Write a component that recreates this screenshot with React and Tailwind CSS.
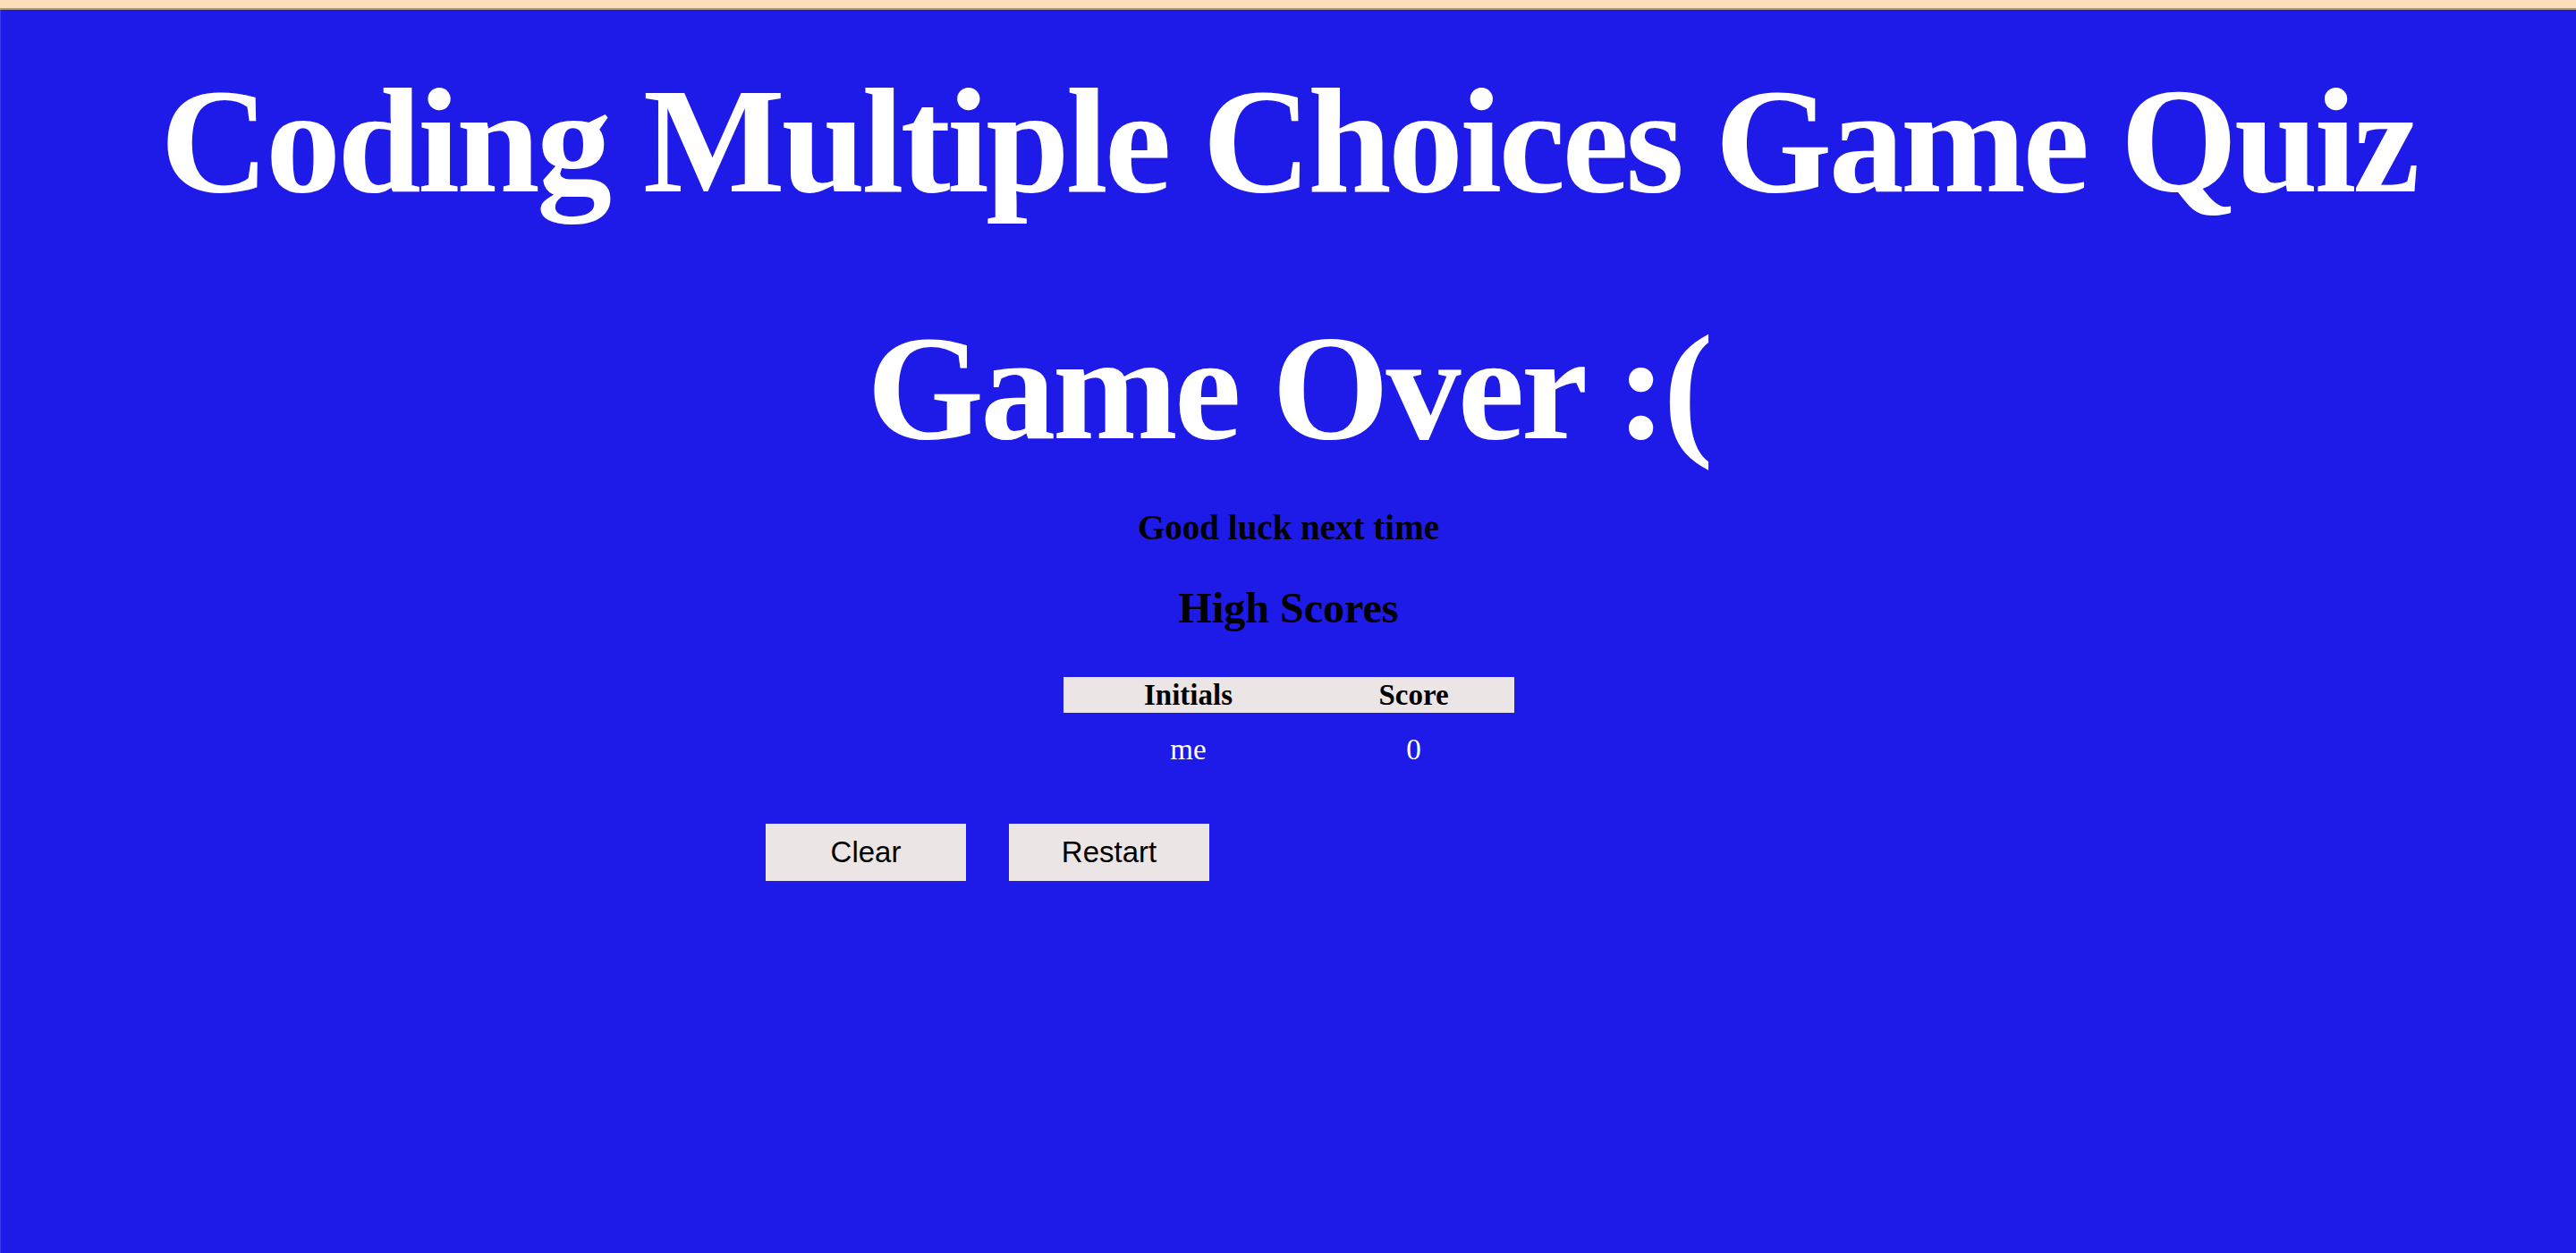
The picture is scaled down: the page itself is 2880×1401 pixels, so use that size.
import React from 'react';

const scores = [{ initials: 'me', score: 0 }];

export default function App() {
  return (
    <div className="flex h-screen flex-col bg-[#1e1be8] font-['Liberation_Serif',serif]">
      {/* top strip */}
      <div className="h-[11px] shrink-0 border-b-2 border-[#a99a88] bg-[#fbdfbb]"></div>

      <main className="flex flex-1 flex-col border-l border-[#3b38ee]">
        <h1 className="mt-[53px] text-center text-[168px] font-bold leading-[186px] tracking-[-3.6px] text-white">
          Coding Multiple Choices Game Quiz
        </h1>

        <h1 className="mt-[90px] text-center text-[168px] font-bold leading-[186px] tracking-[-3.6px] text-white">
          Game Over :(
        </h1>

        {/* results */}
        <div className="flex flex-col items-center">
          <h3 className="mt-[42px] text-[39px] font-bold leading-[43px] text-black">Good luck next time</h3>
          <h2 className="mt-[42px] text-[48px] font-bold leading-[53px] text-black">High Scores</h2>

          <div className="mt-[51px] grid grid-cols-[280px_224px] text-[33px] leading-[40px]">
            <div className="bg-[#ebe5e6] text-center font-bold text-black">Initials</div>
            <div className="bg-[#ebe5e6] text-center font-bold text-black">Score</div>
            {scores.map((s) => (
              <React.Fragment key={s.initials}>
                <div className="mt-[21px] text-center text-white">{s.initials}</div>
                <div className="mt-[21px] text-center text-white">{s.score}</div>
              </React.Fragment>
            ))}
          </div>
        </div>

        <div className="mt-[63px] flex gap-[48px] pl-[855px]">
          <button className="h-[64px] w-[224px] bg-[#ebe5e6] font-['Liberation_Sans',sans-serif] text-[33px] text-black">
            Clear
          </button>
          <button className="h-[64px] w-[224px] bg-[#ebe5e6] font-['Liberation_Sans',sans-serif] text-[33px] text-black">
            Restart
          </button>
        </div>
      </main>
    </div>
  );
}
